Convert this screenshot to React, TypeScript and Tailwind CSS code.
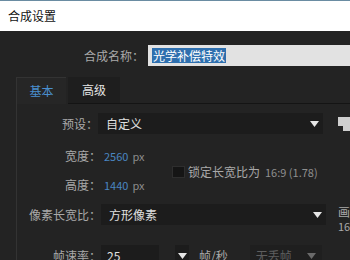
const FONT = "font-['Microsoft_YaHei','Noto_Sans_CJK_SC','Noto_Sans',sans-serif]";

function Arrow({ dim = false }: { dim?: boolean }) {
  return (
    <svg width="9" height="6" viewBox="0 0 9 6" className="shrink-0">
      <path d="M0 0 H9 L4.5 6 Z" fill={dim ? "#6a6a6a" : "#e6e6e6"} />
    </svg>
  );
}

function Dropdown({ value, className = "" }: { value: string; className?: string }) {
  return (
    <div
      className={`flex items-center justify-between h-[21px] bg-[#1c1c1c] pl-[8px] pr-[4px] text-[12px] text-[#e0e0e0] shrink-0 ${className}`}
    >
      <span>{value}</span>
      <Arrow />
    </div>
  );
}

export default function App() {
  return (
    <div className={`w-[350px] h-[260px] overflow-hidden bg-[#232323] ${FONT}`}>
      {/* title bar */}
      <div className="h-[31px] bg-white border-t border-[#6a8ca2] flex items-center pl-[8px] text-[12px] text-[#111]">
        合成设置
      </div>

      {/* name */}
      <div className="flex items-center mt-[14px] h-[21px]">
        <div className="w-[148px] text-right pr-[4px] text-[12px] text-[#a9a9a9]">合成名称：</div>
        <div className="flex-1 h-[21px] bg-[#e2e2e2] flex items-center pl-[4px]">
          <span className="bg-[#2e6fae] text-white text-[12px] leading-[15px] px-[1px]">光学补偿特效</span>
        </div>
      </div>

      {/* tabs */}
      <div className="flex mt-[11px] pl-[16px] h-[27px]">
        <div className="w-[50px] border-l border-t border-[#333] bg-[#262626] flex items-center justify-center text-[12px] text-[#4a8fcf]">
          基本
        </div>
        <div className="w-[52px] ml-[2px] bg-[#1e1e1e] border-b border-[#141414] flex items-center justify-center text-[12px] text-[#e4e4e4]">
          高级
        </div>
        <div className="flex-1 border-b border-[#141414]" />
      </div>

      {/* panel */}
      <div className="ml-[16px] border-l border-[#333] pt-[9px]">
        <div className="flex items-center h-[21px]">
          <div className="w-[84px] text-right text-[12px] text-[#a9a9a9]">预设：</div>
          <Dropdown value="自定义" className="w-[225px]" />
          <div className="ml-[15px] w-[12px] h-[14px] shrink-0 bg-[#cfcfcf] relative">
            <div className="absolute left-0 bottom-0 w-[5px] h-[5px] bg-[#232323]" />
          </div>
        </div>

        <div className="flex items-center h-[16px] mt-[14px]">
          <div className="w-[84px] text-right text-[12px] text-[#a9a9a9]">宽度：</div>
          <span className="ml-[3px] text-[11px] text-[#4a86c0]">2560</span>
          <span className="ml-[4px] text-[11px] text-[#8c8c8c]">px</span>
        </div>

        <div className="flex items-center h-[14px] mt-[1px] pl-[155px]">
          <div className="w-[13px] h-[12px] bg-[#151515] border border-[#2e2e2e]" />
          <span className="ml-[3px] text-[12px] text-[#a9a9a9]">锁定长宽比为</span>
          <span className="ml-[5px] text-[11px] text-[#8f8f8f]">16:9 (1.78)</span>
        </div>

        <div className="flex items-center h-[16px] mt-[-2px]">
          <div className="w-[84px] text-right text-[12px] text-[#a9a9a9]">高度：</div>
          <span className="ml-[3px] text-[11px] text-[#4a86c0]">1440</span>
          <span className="ml-[4px] text-[11px] text-[#8c8c8c]">px</span>
        </div>

        <div className="flex items-center h-[21px] mt-[11px]">
          <div className="w-[84px] shrink-0 text-right text-[12px] text-[#a9a9a9]">像素长宽比：</div>
          <Dropdown value="方形像素" className="w-[225px]" />
          <div className="ml-[12px] self-start shrink-0 whitespace-nowrap flex flex-col text-[12px] leading-[15px] text-[#a9a9a9]">
            <span>画</span>
            <span className="text-[11px]">16:</span>
          </div>
        </div>

        <div className="flex items-center h-[21px] mt-[20px]">
          <div className="w-[84px] text-right text-[12px] text-[#a9a9a9]">帧速率：</div>
          <div className="w-[58px] h-[21px] bg-[#1c1c1c] flex items-center pl-[6px] text-[12px] text-[#e0e0e0]">25</div>
          <div className="ml-[16px] w-[14px] h-[21px] bg-[#1c1c1c] flex items-center justify-center">
            <Arrow />
          </div>
          <span className="ml-[10px] text-[12px] text-[#a9a9a9]">帧/秒</span>
          <div className="ml-[22px] w-[72px] h-[21px] bg-[#1f1f1f] flex items-center justify-between pl-[6px] pr-[6px] text-[12px] text-[#5e5e5e]">
            <span>无丢帧</span>
            <Arrow dim />
          </div>
        </div>
      </div>
    </div>
  );
}
